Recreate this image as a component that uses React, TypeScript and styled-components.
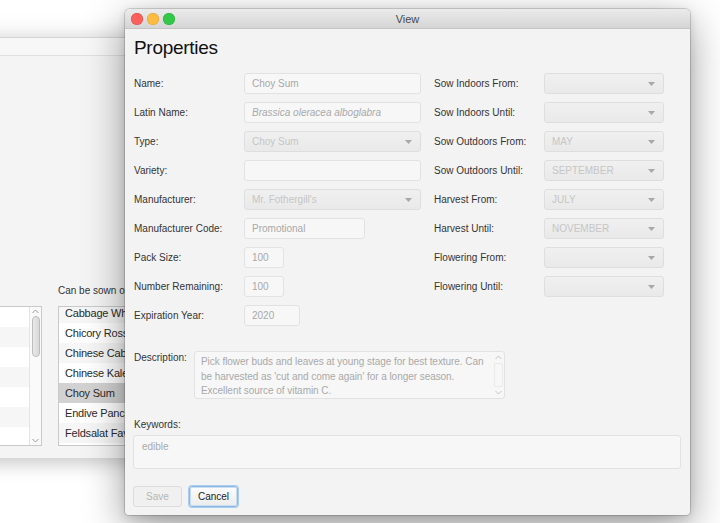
import React from "react";
import styled, { createGlobalStyle, css } from "styled-components";

const Global = createGlobalStyle`
  html, body { margin: 0; padding: 0; background: #ffffff; }
  body { font-family: "Liberation Sans", Arial, sans-serif; overflow: hidden; }
  * { box-sizing: border-box; }
`;

const Desktop = styled.div`
  position: relative;
  width: 720px;
  height: 523px;
  overflow: hidden;
  background: #ffffff;
`;

/* ---------- background window ---------- */
const BgWindow = styled.div`
  position: absolute;
  left: -100px;
  top: 37px;
  width: 420px;
  height: 421px;
  background: #f4f4f4;
  border-top: 1px solid #d4d4d4;
  box-shadow: 0 6px 18px rgba(0, 0, 0, 0.18), 0 -4px 22px rgba(0, 0, 0, 0.08);
  display: flex;
  flex-direction: column;
`;

const BgToolbar = styled.div`
  height: 18px;
  background: #f7f7f7;
  border-bottom: 1px solid #e0e0e0;
  flex: none;
`;

const BgContent = styled.div`
  flex: 1;
  display: flex;
  align-items: flex-end;
  gap: 16px;
  padding: 0 0 12px 20px;
`;

const BgColumn = styled.div`
  display: flex;
  flex-direction: column;
`;

const BgLabel = styled.div`
  font-size: 10px;
  color: #333;
  height: 16px;
  line-height: 16px;
  margin-bottom: 7px;
  white-space: nowrap;
`;

const List = styled.div<{ $w: number }>`
  width: ${(p) => p.$w}px;
  height: 140px;
  border: 1px solid #c9c9c9;
  background: #ffffff;
  display: flex;
  overflow: hidden;
`;

const ListRows = styled.div<{ $scroll?: number }>`
  flex: 1;
  display: flex;
  flex-direction: column;
  margin-top: ${(p) => -(p.$scroll ?? 0)}px;
`;

const ListRow = styled.div<{ $shade?: boolean; $selected?: boolean }>`
  height: 20px;
  flex: none;
  padding-left: 6px;
  font-size: 11px;
  letter-spacing: -0.2px;
  line-height: 20px;
  color: #2b2b2b;
  white-space: nowrap;
  background: ${(p) => (p.$selected ? "#d2d2d2" : p.$shade ? "#f6f6f6" : "#ffffff")};
`;

const VScroll = styled.div`
  width: 12px;
  flex: none;
  border-left: 1px solid #e4e4e4;
  background: #fafafa;
  display: flex;
  flex-direction: column;
  align-items: center;
  padding: 2px 0;
`;

const Thumb = styled.div`
  width: 8px;
  height: 41px;
  margin-top: 2px;
  border: 1px solid #bdbdbd;
  border-radius: 4px;
  background: linear-gradient(to right, #e9e9e9, #d9d9d9);
`;

const ScrollSpacer = styled.div`
  flex: 1;
`;

const Chevron = ({ up }: { up?: boolean }) => (
  <svg width="7" height="5" viewBox="0 0 7 5">
    <path
      d={up ? "M0.5 4 L3.5 1 L6.5 4" : "M0.5 1 L3.5 4 L6.5 1"}
      fill="none"
      stroke="#9a9a9a"
      strokeWidth="1"
    />
  </svg>
);

/* ---------- dialog ---------- */
const Dialog = styled.div`
  position: absolute;
  left: 125px;
  top: 9px;
  width: 565px;
  height: 506px;
  background: #f3f3f3;
  border-radius: 5px 5px 4px 4px;
  box-shadow: 0 0 0 1px rgba(0, 0, 0, 0.14), 0 12px 40px rgba(0, 0, 0, 0.4),
    0 2px 8px rgba(0, 0, 0, 0.12);
  display: flex;
  flex-direction: column;
  overflow: hidden;
`;

const TitleBar = styled.div`
  height: 20px;
  flex: none;
  display: grid;
  grid-template-columns: 1fr auto 1fr;
  align-items: center;
  background: linear-gradient(#ebebeb, #d5d5d5);
  border-bottom: 1px solid #c4c4c4;
`;

const Lights = styled.div`
  display: flex;
  gap: 4px;
  padding-left: 6px;
`;

const Light = styled.span<{ $c: string; $b: string }>`
  width: 12px;
  height: 12px;
  border-radius: 50%;
  background: ${(p) => p.$c};
  box-shadow: inset 0 0 0 0.5px ${(p) => p.$b};
`;

const Title = styled.div`
  font-size: 11px;
  color: #4a4a4a;
`;

const Body = styled.div`
  flex: 1;
  display: flex;
  flex-direction: column;
  padding: 0 9px 8px 9px;
`;

const Heading = styled.h1`
  margin: 7px 0 0 0;
  font-size: 19px;
  font-weight: 400;
  letter-spacing: -0.3px;
  line-height: 24px;
  color: #111;
`;

const FormRow = styled.div`
  display: flex;
  gap: 13px;
  margin-top: 13px;
`;

const FormGrid = styled.div<{ $field: number }>`
  display: grid;
  grid-template-columns: 110px ${(p) => p.$field}px;
  grid-auto-rows: 21px;
  row-gap: 8px;
  align-items: center;
`;

const Label = styled.div`
  font-size: 10px;
  color: #333;
  white-space: nowrap;
`;

const fieldBase = css`
  height: 21px;
  border-radius: 3px;
  font-size: 10px;
  display: flex;
  align-items: center;
  padding: 0 7px;
  white-space: nowrap;
  overflow: hidden;
`;

const Field = styled.div<{ $w?: number; $italic?: boolean }>`
  ${fieldBase};
  width: ${(p) => (p.$w ? `${p.$w}px` : "100%")};
  background: #f7f7f7;
  border: 1px solid #e2e2e2;
  color: #a9a9a9;
  font-style: ${(p) => (p.$italic ? "italic" : "normal")};
`;

const Combo = styled.div`
  ${fieldBase};
  width: 100%;
  justify-content: space-between;
  background: linear-gradient(#f0f0f0, #e9e9e9);
  border: 1px solid #dedede;
  color: #c6c6c6;
`;

const Arrow = () => (
  <svg width="7" height="4" viewBox="0 0 7 4" style={{ flex: "none", marginRight: 1 }}>
    <path d="M0 0 H7 L3.5 4 Z" fill="#a8a8a8" />
  </svg>
);

const DescRow = styled.div`
  display: flex;
  margin-top: 25px;
`;

const DescLabel = styled(Label)`
  width: 60px;
  flex: none;
  padding-top: 1px;
`;

const TextArea = styled.div<{ $w?: number; $h: number }>`
  width: ${(p) => (p.$w ? `${p.$w}px` : "auto")};
  height: ${(p) => p.$h}px;
  background: #f7f7f7;
  border: 1px solid #e2e2e2;
  border-radius: 3px;
  display: flex;
  font-size: 10px;
  color: #a9a9a9;
  line-height: 14.5px;
`;

const TextBody = styled.div<{ $pad: string }>`
  flex: 1;
  padding: ${(p) => p.$pad};
  white-space: nowrap;
  overflow: hidden;
  letter-spacing: -0.05px;
`;

const TAScroll = styled.div`
  width: 12px;
  flex: none;
  display: flex;
  flex-direction: column;
  align-items: center;
  padding: 3px 0;
  opacity: 0.55;
`;

const TATrack = styled.div`
  flex: 1;
  width: 9px;
  margin: 3px 0;
  border: 1px solid #e0e0e0;
  border-radius: 2px;
`;

const KeywordsLabel = styled(Label)`
  margin-top: 20px;
  height: 12px;
  line-height: 12px;
`;

const KeywordsWrap = styled.div`
  margin: 4px 0 0 -1px;
`;

const Buttons = styled.div`
  display: flex;
  gap: 7px;
  margin-top: auto;
  margin-left: -1px;
`;

const Button = styled.div<{ $primary?: boolean }>`
  width: 49px;
  height: 21px;
  border-radius: 3px;
  font-size: 10px;
  display: flex;
  align-items: center;
  justify-content: center;
  ${(p) =>
    p.$primary
      ? css`
          color: #1d1d1d;
          background: linear-gradient(#fdfdfd, #ececec);
          border: 1px solid #8eb8e0;
          box-shadow: 0 0 0 1px #a9cdf0, inset 0 0 0 1px #c9def3;
        `
      : css`
          color: #b6b6b6;
          background: #f0f0f0;
          border: 1px solid #dcdcdc;
        `}
`;

const leftRows: Array<{ label: string; value?: string; kind: "field" | "combo"; w?: number; italic?: boolean }> = [
  { label: "Name:", value: "Choy Sum", kind: "field" },
  { label: "Latin Name:", value: "Brassica oleracea alboglabra", kind: "field", italic: true },
  { label: "Type:", value: "Choy Sum", kind: "combo" },
  { label: "Variety:", value: "", kind: "field" },
  { label: "Manufacturer:", value: "Mr. Fothergill's", kind: "combo" },
  { label: "Manufacturer Code:", value: "Promotional", kind: "field", w: 121 },
  { label: "Pack Size:", value: "100", kind: "field", w: 40 },
  { label: "Number Remaining:", value: "100", kind: "field", w: 40 },
  { label: "Expiration Year:", value: "2020", kind: "field", w: 56 },
];

const rightRows: Array<{ label: string; value: string }> = [
  { label: "Sow Indoors From:", value: "" },
  { label: "Sow Indoors Until:", value: "" },
  { label: "Sow Outdoors From:", value: "MAY" },
  { label: "Sow Outdoors Until:", value: "SEPTEMBER" },
  { label: "Harvest From:", value: "JULY" },
  { label: "Harvest Until:", value: "NOVEMBER" },
  { label: "Flowering From:", value: "" },
  { label: "Flowering Until:", value: "" },
];

const sowList = [
  "Cabbage Wheeler's Imperial",
  "Chicory Rossa di Treviso",
  "Chinese Cabbage",
  "Chinese Kale",
  "Choy Sum",
  "Endive Pancalieri",
  "Feldsalat Favor",
];

export default function App() {
  return (
    <Desktop>
      <Global />
      <BgWindow>
        <BgToolbar />
        <BgContent>
          <BgColumn>
            <List $w={122}>
              <ListRows>
                {Array.from({ length: 7 }).map((_, i) => (
                  <ListRow key={i} $shade={i % 2 === 1} />
                ))}
              </ListRows>
              <VScroll>
                <Chevron up />
                <Thumb />
                <ScrollSpacer />
                <Chevron />
              </VScroll>
            </List>
          </BgColumn>
          <BgColumn>
            <BgLabel>Can be sown outdoors in this month:</BgLabel>
            <List $w={200}>
              <ListRows $scroll={4}>
                {sowList.map((s, i) => (
                  <ListRow key={s} $shade={i % 2 === 0} $selected={s === "Choy Sum"}>
                    {s}
                  </ListRow>
                ))}
              </ListRows>
            </List>
          </BgColumn>
        </BgContent>
      </BgWindow>

      <Dialog>
        <TitleBar>
          <Lights>
            <Light $c="#fc605c" $b="#de4a45" />
            <Light $c="#fdbc40" $b="#dea236" />
            <Light $c="#34c84a" $b="#2aa93c" />
          </Lights>
          <Title>View</Title>
          <span />
        </TitleBar>
        <Body>
          <Heading>Properties</Heading>
          <FormRow>
            <FormGrid $field={177}>
              {leftRows.map((r) => (
                <React.Fragment key={r.label}>
                  <Label>{r.label}</Label>
                  {r.kind === "combo" ? (
                    <Combo>
                      <span>{r.value}</span>
                      <Arrow />
                    </Combo>
                  ) : (
                    <Field $w={r.w} $italic={r.italic}>
                      {r.value}
                    </Field>
                  )}
                </React.Fragment>
              ))}
            </FormGrid>
            <FormGrid $field={120}>
              {rightRows.map((r) => (
                <React.Fragment key={r.label}>
                  <Label>{r.label}</Label>
                  <Combo>
                    <span>{r.value}</span>
                    <Arrow />
                  </Combo>
                </React.Fragment>
              ))}
            </FormGrid>
          </FormRow>
          <DescRow>
            <DescLabel>Description:</DescLabel>
            <TextArea $w={311} $h={48}>
              <TextBody $pad="3px 0 0 6px">
                Pick flower buds and leaves at young stage for best texture. Can
                <br />
                be harvested as 'cut and come again' for a longer season.
                <br />
                Excellent source of vitamin C.
              </TextBody>
              <TAScroll>
                <Chevron up />
                <TATrack />
                <Chevron />
              </TAScroll>
            </TextArea>
          </DescRow>
          <KeywordsLabel>Keywords:</KeywordsLabel>
          <KeywordsWrap>
            <TextArea $h={34}>
              <TextBody $pad="4px 8px 0 8px">edible</TextBody>
            </TextArea>
          </KeywordsWrap>
          <Buttons>
            <Button>Save</Button>
            <Button $primary>Cancel</Button>
          </Buttons>
        </Body>
      </Dialog>
    </Desktop>
  );
}
